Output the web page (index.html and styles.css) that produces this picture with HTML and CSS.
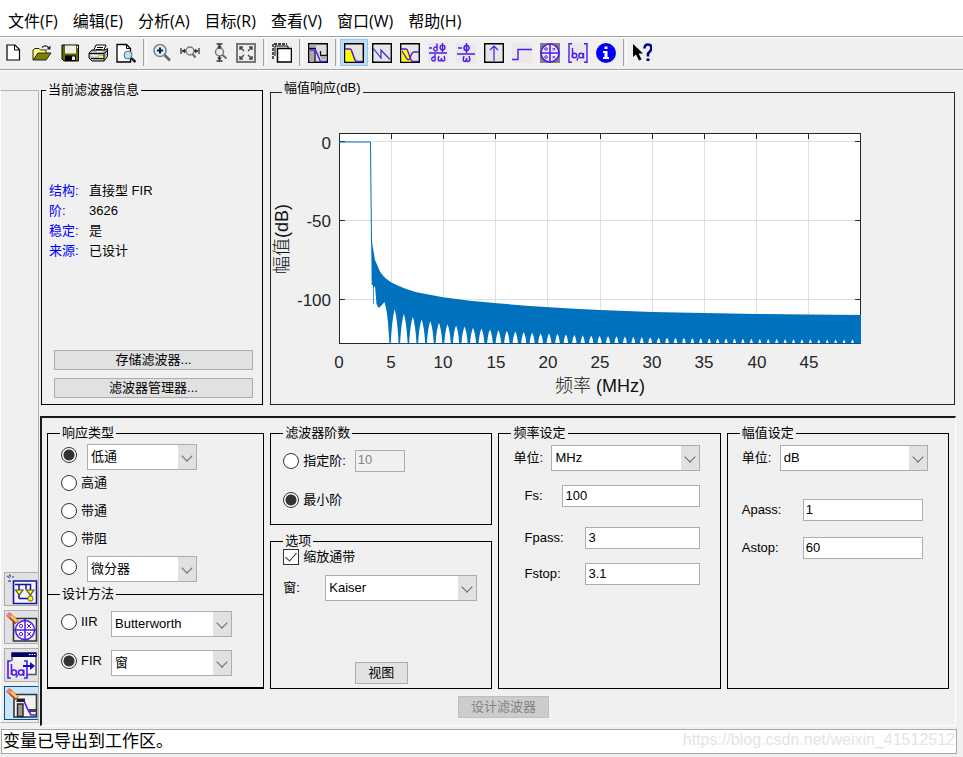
FILE: index.html
```html
<!DOCTYPE html>
<html lang="zh-CN">
<head>
<meta charset="utf-8">
<meta name="viewport" content="width=device-width, initial-scale=1">
<title>Filter Designer</title>
<link rel="stylesheet" href="styles.css">
</head>
<body>
<nav class="menu">
  <a href="#">文件(F)</a>
  <a href="#">编辑(E)</a>
  <a href="#">分析(A)</a>
  <a href="#">目标(R)</a>
  <a href="#">查看(V)</a>
  <a href="#">窗口(W)</a>
  <a href="#">帮助(H)</a>
</nav>

<div class="toolbar" role="toolbar">
  <button type="button" aria-label="新建"><svg viewBox="0 0 20 20"><path d="M3 2h8l4.500 4.500V17H3z" fill="#fff" stroke="#000" stroke-width="1.200"/><path d="M10.500 2v5h5" fill="none" stroke="#000"/></svg></button>
  <button type="button" aria-label="打开"><svg viewBox="0 0 20 20"><path d="M1 17V7l2-1.500h4L8.500 7H14v3" fill="#ffff80" stroke="#222"/><path d="M1 17l5-7h13l-5 7z" fill="#808000" stroke="#222"/><path d="M10 4.500q3.500-3.500 7 .5" fill="none" stroke="#222" stroke-width="1.200"/><path d="M18.500 2.500v4h-4z" fill="#222"/></svg></button>
  <button type="button" aria-label="保存"><svg viewBox="0 0 20 20"><path d="M2 2h16.500v16H4l-2-2z" fill="#686800" stroke="#000"/><path d="M5 2.500h11v8H5z" fill="#eee"/><path d="M5 12.500h11V18H5z" fill="#000"/><path d="M12 13.500h3V17h-3z" fill="#e8e8e8"/><path d="M17 3h1v2h-1z" fill="#fff"/></svg></button>
  <button type="button" aria-label="打印"><svg viewBox="0 0 20 20"><path d="M5 9l3-7h10l-3 7z" fill="#fff" stroke="#000"/><path d="M9 4.500h6M8 6.500h6" stroke="#000"/><path d="M1 10l3-3h13l2.500-1.500v8L16 18H4l-3-3z" fill="#b5b5b5" stroke="#000"/><path d="M1 10.500h15v7M16 10.500l3.500-3M3 15.500h13" fill="none" stroke="#000"/><path d="M9 8.500h5" stroke="#fff"/><path d="M11 13h4v2h-4z" fill="#ff0"/><path d="M3 12h7v1.500H3z" fill="#eee"/></svg></button>
  <button type="button" aria-label="打印预览"><svg viewBox="0 0 20 20"><path d="M1 1.500h9.500l4 4V19H1z" fill="#fff" stroke="#000" stroke-width="1.300"/><path d="M10.500 1.500v4h4" fill="none" stroke="#000"/><circle cx="12" cy="12" r="4" fill="#a8e8f4" stroke="#667"/><path d="M15 15l4.500 4" stroke="#223" stroke-width="2.400"/></svg></button>
  <span class="sep"></span>
  <button type="button" aria-label="放大"><svg viewBox="0 0 20 20"><circle cx="8" cy="7.500" r="6" fill="#e2eef2" stroke="#788" stroke-width="1.600"/><path d="M8 4.500v6M5 7.500h6" stroke="#124" stroke-width="2"/><path d="M12.500 12l5.500 5.500" stroke="#666" stroke-width="2.600"/></svg></button>
  <button type="button" aria-label="横向缩放"><svg viewBox="0 0 20 20"><circle cx="10" cy="8" r="4" fill="#e0ecf2" stroke="#777" stroke-width="1.400"/><path d="M12.500 11l3 3.500" stroke="#666" stroke-width="2"/><path d="M1 5v6M19 5v6M2 8h4M14 8h4" stroke="#333" stroke-width="1.300"/><path d="M2 8l3-2.500v5zM18 8l-3-2.500v5z" fill="#333"/></svg></button>
  <button type="button" aria-label="纵向缩放"><svg viewBox="0 0 20 20"><circle cx="11.500" cy="9" r="4" fill="#e0ecf2" stroke="#777" stroke-width="1.400"/><path d="M14.500 12l4 3.500" stroke="#666" stroke-width="2"/><path d="M8.500 1h6M8.500 18h6M11.500 1v5M11.500 13v5" stroke="#333" stroke-width="1.300"/><path d="M11.500 1.500l2.500 3H9zM11.500 17.500l2.500-3H9z" fill="#333"/></svg></button>
  <button type="button" aria-label="完整视图"><svg viewBox="0 0 20 20"><path d="M1 1h18v18H1z" fill="#eee" stroke="#777" stroke-width="2"/><path d="M4 7V4h3M13 4h3v3M16 13v3h-3M7 16H4v-3M4 4l4 4M16 4l-4 4M16 16l-4-4M4 16l4-4" fill="none" stroke="#444" stroke-width="1.400"/></svg></button>
  <span class="sep"></span>
  <button type="button" aria-label="复制图窗"><svg viewBox="0 0 20 20"><path d="M1 16V1h14" fill="none" stroke="#000" stroke-width="1.300" stroke-dasharray="3 1"/><path d="M3 13V3h13v2" fill="#eee" stroke="#000"/><path d="M5.500 5.500h14V19h-14z" fill="#fff" stroke="#000" stroke-width="1.500"/></svg></button>
  <span class="sep"></span>
  <button type="button" aria-label="滤波器设定"><svg viewBox="0 0 20 20"><path d="M.7.700h18.600v18.600H.7z" fill="#dcdcdc" stroke="#000" stroke-width="1.400"/><path d="M1.500 1.500H8v3H1.500z" fill="#aaa"/><path d="M1 5.500h7" stroke="#000" stroke-width="1.500"/><path d="M2 8h4.500v11H2z" fill="#aaa"/><path d="M7 7v12M12.500 12.500V8M12 12.500h7" stroke="#111" stroke-width="1.300"/><path d="M13 13.500h6v3h-6z" fill="#aaa"/><path d="M2 7h5.500l5 11.500H19" fill="none" stroke="#5218f0" stroke-width="1.500"/></svg></button>
  <span class="sep"></span>
  <button type="button" class="on" aria-label="幅值响应"><svg viewBox="0 0 20 20"><path d="M.7.700h18.600v18.600H.7z" fill="#e4e4e4" stroke="#000" stroke-width="1.400"/><path d="M1.500 6H7l4.500 12.500h-10z" fill="#ff0"/><path d="M1 6h5q1 0 1.500 1.500l3.500 9.500 1.500 1.500H19" fill="none" stroke="#5218d0" stroke-width="1.500"/></svg></button>
  <button type="button" aria-label="相位响应"><svg viewBox="0 0 20 20"><path d="M.7.700h18.600v18.600H.7z" fill="#e6e6e6" stroke="#000" stroke-width="1.400"/><path d="M1 5l8 10V7l9 9.500" fill="none" stroke="#3428e8" stroke-width="1.200"/></svg></button>
  <button type="button" aria-label="幅值和相位响应"><svg viewBox="0 0 20 20"><path d="M.7.700h18.600v18.600H.7z" fill="#e6e6e6" stroke="#000" stroke-width="1.400"/><path d="M1.500 6H7l4.500 12.500h-10z" fill="#ff0"/><path d="M1 6h5q1 0 1.500 1.500l3.500 9.500 1.500 1.500H19M2 8l5 8q2 2 3-1 2-6 4-6h5" fill="none" stroke="#5218d0" stroke-width="1.300"/></svg></button>
  <button type="button" aria-label="群延迟响应"><svg viewBox="0 0 20 20"><path d="M0 0h20v20H0z" fill="#e9e9e9"/><g fill="none" stroke="#5218f0" stroke-width="1.400"><path d="M1 5h3M1 10h18M9 .500V8M9 4.500a2 2 0 1 0 0 3M14.500 0v9"/><circle cx="14.500" cy="4.500" r="2.400"/><path d="M7 11v7M7 14.500a2 2 0 1 0 0 3M11 13q-2 5 1 5 1.500 0 1.500-3 0 3 1.500 3 3 0 1-5"/></g></svg></button>
  <button type="button" aria-label="相位延迟"><svg viewBox="0 0 20 20"><path d="M0 0h20v20H0z" fill="#e9e9e9"/><g fill="none" stroke="#5218f0" stroke-width="1.500"><path d="M2 5h4M1 11h18M10.500 0v10"/><circle cx="10.500" cy="5" r="2.500"/><path d="M8 13q-2 5.500 1 5.500 1.500 0 1.500-3.500 0 3.500 1.500 3.500 3 0 1-5.500"/></g></svg></button>
  <button type="button" aria-label="冲激响应"><svg viewBox="0 0 20 20"><path d="M.7.700h18.600v18.600H.7z" fill="#e6e6e6" stroke="#000" stroke-width="1.400"/><path d="M10 18V3M6 7l4-4 4 4" fill="none" stroke="#5218f0" stroke-width="1.200"/></svg></button>
  <button type="button" aria-label="阶跃响应"><svg viewBox="0 0 20 20"><path d="M0 0h20v20H0z" fill="#e9e9e9"/><path d="M0 16.500h6v-10h14" fill="none" stroke="#5218f0" stroke-width="1.400"/></svg></button>
  <button type="button" aria-label="零极点图"><svg viewBox="0 0 20 20"><path d="M0 0h20v20H0z" fill="#808080"/><circle cx="10" cy="10" r="9" fill="#eee" stroke="#5218f0" stroke-width="1.600"/><path d="M10 1v18M1 10h18" stroke="#5218f0" stroke-width="1.600"/><g fill="none" stroke="#5218f0"><circle cx="6" cy="6" r="1.300"/><circle cx="6" cy="14" r="1.300"/><path d="M12.500 5l2.500 2.500M15 5l-2.500 2.500M12.500 13l2.500 2.500M15 13l-2.500 2.500"/></g></svg></button>
  <button type="button" aria-label="滤波器系数"><svg viewBox="0 0 20 20"><path d="M0 0h20v20H0z" fill="#e9e9e9"/><g fill="none" stroke="#5218f0" stroke-width="1.400"><path d="M4 .700H1v18.600h3M16 .700h3v18.600h-3M4.500 5v10"/><circle cx="6.500" cy="12.500" r="2.200"/><circle cx="13" cy="12.500" r="2.200"/><path d="M15.500 10v5.500M10 14.500l-1 3"/></g></svg></button>
  <button type="button" aria-label="滤波器信息"><svg viewBox="0 0 20 20"><circle cx="10" cy="10" r="10" fill="#0000f4"/><path d="M8.500 3.500h3v2.500h-3zM7 8h4.500v6H13v2H7v-2h1.500v-4H7z" fill="#fff"/></svg></button>
  <span class="sep"></span>
  <button type="button" aria-label="这是什么"><svg viewBox="0 0 20 20"><path d="M1 1v13l3-2.500 3 6 2.500-1-2.800-6H11z" fill="#000"/><path d="M12.500 5.500q0-4 3.500-4t3.500 3.500q0 2.500-3.500 5.500v3" fill="none" stroke="#000080" stroke-width="2.600"/><path d="M14.500 15.500h3V18h-3z" fill="#000080"/></svg></button>
</div>

<div class="workspace">
  <aside class="sidebar">
    <button type="button" aria-label="实现模型"><svg viewBox="0 0 33 32"><path d="M8.500 8h23v22.500h-23z" fill="#f4f4f4" stroke="#1414a0" stroke-width="1.600"/><path d="M10 11.500h15.500V24M18 11.500h3v5M14 12v13.500M14 25.500h9" fill="none" stroke="#1414a0" stroke-width="1.500"/><path d="M10.500 17h7.500l-3.700 5zM21.500 17H29l-3.700 5z" fill="#ff0" stroke="#554" stroke-width="1.200"/><circle cx="25.500" cy="25.500" r="2.600" fill="#ff0" stroke="#554"/><path d="M2 3l3 2M4 1.500l2 2M8 3v2M3 8h3" stroke="#55a" stroke-width="1.300"/></svg></button>
    <button type="button" aria-label="零极点编辑器"><svg viewBox="0 0 33 32"><path d="M8.500 7.500h23V30h-23z" fill="#e8e8e8" stroke="#333" stroke-width="1.600"/><g fill="none" stroke="#5218f0" stroke-width="1.500"><circle cx="20" cy="19" r="9.500" fill="#fff"/><path d="M20 8v22M9 19h22"/><g stroke-width="1"><circle cx="16" cy="15" r="1.600"/><circle cx="16" cy="23" r="1.600"/><path d="M22 13l4 4M26 13l-4 4M22 21l4 4M26 21l-4 4"/></g></g><path d="M3 3l9 8.500" stroke="#a64a10" stroke-width="5"/><path d="M5.500 4.500l6.500 6" stroke="#ffc46a" stroke-width="3"/><path d="M2.500 2.500l3 3" stroke="#f08080" stroke-width="4"/></svg></button>
    <button type="button" aria-label="导入滤波器"><svg viewBox="0 0 33 32"><path d="M7 4h24v21.500H7z" fill="#f6f6f6" stroke="#555" stroke-width="1.500"/><path d="M6.500 3.500h25V8h-25z" fill="#000070"/><path d="M24 5.500h1.500M26.500 5.500H28M29 5.500h1.500" stroke="#fff"/><path d="M3 12h19v17H3z" fill="#eee"/><g fill="none" stroke="#5218f0" stroke-width="1.600"><path d="M6 12H3v17h3M19 12h3v17h-3M6.500 15v11"/><circle cx="9" cy="23.500" r="2.500"/><circle cx="16" cy="23.500" r="2.500"/><path d="M18.700 20.500V27M12.500 25.500l-1.500 3"/></g><path d="M18 17h9" stroke="#1010b0" stroke-width="2"/><path d="M25 13l5 4-5 4z" fill="#1010b0"/></svg></button>
    <button type="button" class="on" aria-label="设计滤波器"><svg viewBox="0 0 33 32"><path d="M9 7.500h22.500V30H9z" fill="#f2f2f2" stroke="#333" stroke-width="1.600"/><path d="M11.500 11.500H20V15h-8.500z" fill="#222"/><path d="M12.500 17H18v12.500h-5.500z" fill="#999" stroke="#222" stroke-width="1.400"/><path d="M24 22h7v3h-7z" fill="#444"/><path d="M19 14l4 9 3 5h5" fill="none" stroke="#5218f0" stroke-width="1.600"/><path d="M3 3l9 8.500" stroke="#a64a10" stroke-width="5"/><path d="M5.500 4.500l6.500 6" stroke="#ffc46a" stroke-width="3"/><path d="M2.500 2.500l3 3" stroke="#f08080" stroke-width="4"/></svg></button>
  </aside>

  <main class="content">
    <div class="top">
      <fieldset class="info">
        <legend>当前滤波器信息</legend>
        <dl>
          <dt>结构:</dt><dd>直接型 FIR</dd>
          <dt>阶:</dt><dd>3626</dd>
          <dt>稳定:</dt><dd>是</dd>
          <dt>来源:</dt><dd>已设计</dd>
        </dl>
        <div class="info-actions">
          <button type="button" class="btn">存储滤波器...</button>
          <button type="button" class="btn">滤波器管理器...</button>
        </div>
      </fieldset>

      <fieldset class="chart">
        <legend>幅值响应(dB)</legend>
        <svg viewBox="271 105 683 299" role="img" aria-label="幅值响应">
          <path d="M339 133h522v211H339z" fill="#fff"/>
          <path class="grid" d="M391.500 134v209M443.500 134v209M495.500 134v209M547.500 134v209M600.500 134v209M652.500 134v209M704.500 134v209M756.500 134v209M808.500 134v209M340 141.500h520M340 220.500h520M340 299.500h520"/>
          <path class="axis" d="M339.500 133.500h521v210h-521zM391.500 134v5M443.500 134v5M495.500 134v5M547.500 134v5M600.500 134v5M652.500 134v5M704.500 134v5M756.500 134v5M808.500 134v5M340 141.500h5M340 220.500h5M340 299.500h5M860 141.500h-5M860 220.500h-5M860 299.500h-5"/>
          <path class="pass" d="M339 142h31.500l1 103"/>
          <path class="band" d="M371 225L372 242L375 260L380 271.500Q384 278 391.500 282.500Q402 288 416.500 292.300L443 297.300L470 300.700L497 303.300L530 306L570 308.500L600 310L652 312L704 313L757 314L808 314.500L861 315V343.500H389.500L388.500 330Q387.500 312 384.500 302L381 306L378.500 308L376.500 304L375 286L373.700 288V304H373V285H371.700Z"/>
          <path id="lobes" fill="#fff" d=""/>
          <g class="ticks end"><text x="331" y="149">0</text><text x="331" y="227">-50</text><text x="331" y="306">-100</text></g>
          <g class="ticks mid"><text x="339" y="368">0</text><text x="391" y="368">5</text><text x="443" y="368">10</text><text x="496" y="368">15</text><text x="548" y="368">20</text><text x="600" y="368">25</text><text x="652" y="368">30</text><text x="704" y="368">35</text><text x="757" y="368">40</text><text x="809" y="368">45</text></g>
          <text class="name" x="600" y="392">频率 (MHz)</text>
          <text class="name" transform="translate(288 239) rotate(-90)">幅值(dB)</text>
        </svg>
      </fieldset>
    </div>

    <form class="design">
      <div class="columns">
        <div class="stack joined">
          <fieldset class="response">
            <legend>响应类型</legend>
            <div class="row"><input type="radio" name="resp" id="r1" aria-label="低通" checked><span class="select"><select aria-label="低通类型"><option>低通</option></select></span></div>
            <div class="row"><input type="radio" name="resp" id="r2"><label for="r2">高通</label></div>
            <div class="row"><input type="radio" name="resp" id="r3"><label for="r3">带通</label></div>
            <div class="row"><input type="radio" name="resp" id="r4"><label for="r4">带阻</label></div>
            <div class="row"><input type="radio" name="resp" id="r5" aria-label="微分器"><span class="select"><select aria-label="其他类型"><option>微分器</option></select></span></div>
          </fieldset>
          <fieldset class="method">
            <legend>设计方法</legend>
            <div class="row tall"><input type="radio" name="method" id="m1"><label for="m1">IIR</label><span class="select"><select aria-label="IIR 方法"><option>Butterworth</option></select></span></div>
            <div class="row tall"><input type="radio" name="method" id="m2" checked><label for="m2">FIR</label><span class="select"><select aria-label="FIR 方法"><option>窗</option></select></span></div>
          </fieldset>
        </div>

        <div class="stack">
          <fieldset class="order">
            <legend>滤波器阶数</legend>
            <div class="row tall"><input type="radio" name="order" id="o1"><label for="o1">指定阶:</label><input type="text" class="short" aria-label="阶数" value="10" disabled></div>
            <div class="row tall"><input type="radio" name="order" id="o2" checked><label for="o2">最小阶</label></div>
          </fieldset>
          <fieldset class="options">
            <legend>选项</legend>
            <div class="check"><input type="checkbox" id="scale" checked><label for="scale">缩放通带</label></div>
            <div class="window"><label for="win">窗:</label><span class="select"><select id="win"><option>Kaiser</option></select></span></div>
            <button type="button" class="btn view">视图</button>
          </fieldset>
        </div>

        <fieldset class="spec freq">
          <legend>频率设定</legend>
          <div class="unit"><label for="fu">单位:</label><span class="select"><select id="fu"><option>MHz</option></select></span></div>
          <div class="field fs"><label for="fs">Fs:</label><input type="text" id="fs" value="100"></div>
          <div class="field fpass"><label for="fp">Fpass:</label><input type="text" id="fp" value="3"></div>
          <div class="field"><label for="fst">Fstop:</label><input type="text" id="fst" value="3.1"></div>
        </fieldset>

        <fieldset class="spec mag">
          <legend>幅值设定</legend>
          <div class="unit"><label for="mu">单位:</label><span class="select"><select id="mu"><option>dB</option></select></span></div>
          <div class="field apass"><label for="ap">Apass:</label><input type="text" id="ap" value="1"></div>
          <div class="field"><label for="as">Astop:</label><input type="text" id="as" value="60"></div>
        </fieldset>
      </div>
      <button type="submit" class="btn submit" disabled>设计滤波器</button>
    </form>
  </main>
</div>

<footer class="status"><span>变量已导出到工作区。</span><span class="mark">https://blog.csdn.net/weixin_41512512</span></footer>
<script src="lobes.js"></script>
</body>
</html>
```
FILE: styles.css
```css
* { box-sizing: border-box; }

body {
  margin: 0;
  min-height: 100vh;
  display: flex;
  flex-direction: column;
  background: #f0f0f0;
  color: #000;
  font: 13px/16px "Liberation Sans", "Noto Sans CJK SC", sans-serif;
}

button, input, select { font: inherit; color: inherit; margin: 0; }

/* menu and toolbar */
.menu {
  display: flex;
  gap: 15px;
  height: 37px;
  padding: 6px 8px 0;
  background: #fff;
  border-bottom: 1px solid #a0a0a0;
  font: 16px/30px "Open Sans", "Noto Sans CJK SC", sans-serif;
}
.menu a { color: #000; text-decoration: none; white-space: nowrap; }

.toolbar {
  display: flex;
  height: 33px;
  padding-top: 1px;
  border-top: 1px solid #fff;
  border-bottom: 1px solid #a0a0a0;
}
.toolbar button {
  display: flex;
  align-items: center;
  justify-content: center;
  width: 28px;
  height: 27px;
  padding: 0;
  border: 1px solid transparent;
  background: none;
}
.toolbar button.on { background: #c0dcf3; border-color: #90c8f6; }
.toolbar svg { width: 20px; height: 20px; flex: none; }
.sep { width: 8px; height: 27px; }
.sep::before {
  content: "";
  display: block;
  width: 2px;
  height: 100%;
  margin-left: 3px;
  border-left: 1px solid #a0a0a0;
  border-right: 1px solid #fff;
}

/* workspace */
.workspace { flex: 1; display: flex; border-top: 1px solid #fff; }

.sidebar {
  display: flex;
  flex-direction: column;
  justify-content: flex-end;
  gap: 4px;
  width: 39px;
  margin: 19px 1px 5px 0;
  padding: 0 0 2px 3px;
  border: 1px solid #b4b4b4;
  border-left-color: #fff;
}
.sidebar button {
  height: 34px;
  padding: 0;
  background: #e1e1e1;
  border: 1px solid #adadad;
  border-right: 0;
}
.sidebar button.on { background: #cce4f7; border-color: #005499; }
.sidebar svg { display: block; width: 33px; height: 32px; }

.content { flex: 1; min-width: 0; display: flex; flex-direction: column; padding: 9px 7px 2px 0; }

fieldset { min-width: 0; margin: 0; padding: 0; border: 1px solid #000; }
legend { margin-left: 12px; padding: 0 2px; line-height: 16px; }

.btn {
  height: 22px;
  padding: 0;
  line-height: 20px;
  background: #e1e1e1;
  border: 1px solid #adadad;
}
.btn:disabled { background: #ccc; border-color: #bfbfbf; color: #838383; }

.top {
  display: grid;
  grid-template-columns: 222fr 685fr;
  gap: 7px;
  padding: 0 1px;
  margin-bottom: 11px;
}

.info { display: flex; flex-direction: column; margin-top: 2px; padding: 83px 9px 6px 12px; }
.info legend { margin-left: -8px; }
.info dl { display: grid; grid-template-columns: 40px 1fr; margin: 0 0 0 -5px; line-height: 20px; }
.info dt { color: #00f; }
.info dd { margin: 0; }
.info-actions { display: flex; flex-direction: column; gap: 8px; margin-top: auto; }
.info-actions .btn { height: 20px; line-height: 18px; }

.chart { border-color: #262626; }
.chart legend { margin-left: 11px; padding-bottom: 9px; }
.chart svg { display: block; width: 100%; font-family: "Liberation Sans", "Noto Sans CJK SC", sans-serif; }
.grid { fill: none; stroke: #dfdfdf; shape-rendering: crispEdges; }
.axis { fill: none; stroke: #262626; shape-rendering: crispEdges; }
.pass { fill: none; stroke: #0072bd; }
.band { fill: #0072bd; }
.ticks { font-size: 17px; fill: #262626; }
.end { text-anchor: end; }
.mid, .name { text-anchor: middle; }
.name { font-size: 18px; fill: #111; font-weight: 300; }

/* design form */
.design {
  flex: 1;
  display: flex;
  flex-direction: column;
  padding: 7px 6px 7px 5px;
  border: 2px solid #1a1a1a;
  border-right: 1px solid #fff;
  border-bottom: 1px solid #fff;
}
.columns {
  flex: 1;
  display: grid;
  grid-template-columns: 217fr 222fr 222fr 222fr;
  gap: 6px;
  margin-bottom: 7px;
}
.stack { display: flex; flex-direction: column; gap: 8px; }
.stack.joined { gap: 0; }

.row { display: flex; align-items: center; gap: 4px; height: 28px; padding-left: 13px; }
.row.tall { height: 39px; }
.order .row, .check { padding-left: 12px; }

.response { height: 169px; border-bottom: 0; }
.response .select { width: 110px; margin: 4px 0 0 6px; }
.method { flex: 1; margin-top: -8px; border-bottom-width: 2px; }
.method label { width: 26px; }
.method .select { width: 121px; margin-top: 4px; }

.order { padding-bottom: 5px; }
.options { flex: 1; display: flex; flex-direction: column; padding-bottom: 4px; }
.check { display: flex; align-items: center; gap: 4px; }
.window { display: flex; align-items: center; margin-top: 10px; padding: 0 14px 0 12px; }
.window label { width: 42px; }
.window .select { flex: 1; }
.view { width: 53px; margin: auto auto 0; }
.short { width: 50px; margin-left: 5px; }

.spec { padding: 4px 20px 0 14px; }
.spec legend { margin-left: -2px; }
.unit, .field { display: flex; align-items: center; }
.unit label { width: 38px; }
.unit .select { flex: 1; min-width: 0; }
.field { margin-top: 14px; }
.field label { width: 61px; }
.field input { flex: 1; min-width: 0; }
.freq .field { padding-left: 11px; }
.fs label { width: 38px; }
.fpass { margin-top: 20px; }
.mag .field { margin-top: 16px; padding-right: 5px; }
.mag .apass { margin-top: 28px; }

.submit { align-self: center; width: 91px; margin-left: 11px; }

/* controls */
input[type="text"] {
  height: 22px;
  padding: 0 2px 2px;
  background: #fff;
  border: 1px solid #abadb3;
  border-radius: 0;
}
input[type="text"]:disabled { background: #f0f0f0; color: #838383; }

input[type="radio"], input[type="checkbox"] {
  appearance: none;
  flex: none;
  width: 16px;
  height: 16px;
  background: #fff;
  border: 1px solid #333;
}
input[type="radio"] { border-radius: 50%; }
input[type="radio"]:checked { background: radial-gradient(circle, #333 5px, #fff 6px); }
input[type="checkbox"]:checked::before {
  content: "";
  display: block;
  width: 5px;
  height: 10px;
  margin: 0 auto;
  border: solid #333;
  border-width: 0 1px 1px 0;
  transform: rotate(42deg);
}

.select {
  display: grid;
  grid-template-columns: 1fr 18px;
  height: 26px;
  background: #fff;
  border: 1px solid #abadb3;
}
.select select {
  grid-area: 1 / 1 / 2 / 3;
  appearance: none;
  min-width: 0;
  padding: 0 20px 0 3px;
  background: none;
  border: 0;
  border-radius: 0;
}
.select::before, .select::after { content: ""; grid-area: 1 / 2; pointer-events: none; }
.select::before { background: #e1e1e1; }
.select::after {
  z-index: 1;
  width: 7px;
  height: 7px;
  margin: 7px auto 0;
  border: solid #666;
  border-width: 0 1px 1px 0;
  transform: rotate(45deg);
}

/* status bar */
.status {
  display: flex;
  justify-content: space-between;
  margin: 1px 6px 3px 1px;
  padding: 0 1px;
  background: #fff;
  border: 1px solid #a8a8a8;
  font-size: 17px;
  line-height: 23px;
}
.mark { color: #e4e4e4; font-size: 16px; line-height: 20px; }
```
FILE: lobes.js
```js
// Gaps between the side lobes along the bottom edge of the stopband.
const floor = 343;
let d = "";
for (let i = 0; i < 56; i++) {
  const x = 394.7 + i * 8.43 + 2.6 * (1 - Math.exp(-i / 3));
  if (x > 858) break;
  const t = (x - 394.7) / 466;
  const top = 340.5 - 31.5 * Math.exp(-3.6 * Math.pow(t, 0.78));
  const w = 1 + 2.9 * Math.exp(-2.2 * t);
  const mid = top + (floor - top) * 0.3;
  d += `M${x - w} ${floor}Q${x - w * 0.7} ${mid} ${x} ${top}Q${x + w * 0.7} ${mid} ${x + w} ${floor}Z`;
}
document.getElementById("lobes").setAttribute("d", d);
```
